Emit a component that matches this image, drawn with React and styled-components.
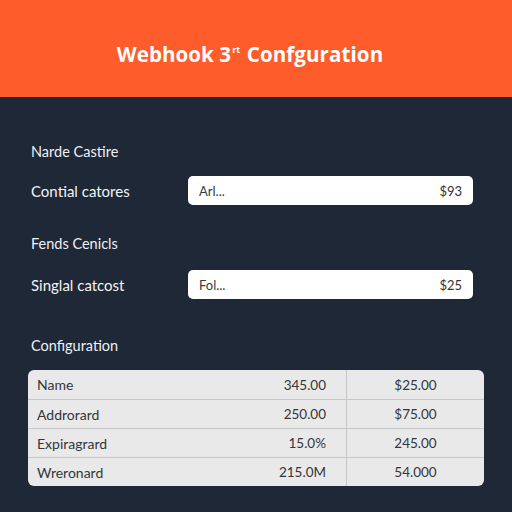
import React from "react";
import styled, { createGlobalStyle } from "styled-components";

const Global = createGlobalStyle`
  html, body { margin: 0; padding: 0; background: #1f2837; }
  body { font-family: Lato, "Open Sans", "Liberation Sans", sans-serif; }
`;

const Page = styled.div`
  width: 512px;
  height: 512px;
  background: #1f2837;
  display: flex;
  flex-direction: column;
  overflow: hidden;
`;

const Header = styled.header`
  height: 97px;
  background: #fe5c2a;
  display: flex;
  align-items: center;
  justify-content: center;
  padding-right: 12px;
  padding-top: 10px;
  box-sizing: border-box;
`;

const Title = styled.h1`
  margin: 0;
  color: #ffffff;
  font-family: "Open Sans", Lato, sans-serif;
  font-weight: 700;
  font-size: 20.5px;
  letter-spacing: 0.1px;
`;

const Sup = styled.sup`
  font-size: 9px;
  vertical-align: 9px;
  line-height: 0;
  margin-left: 1px;
  margin-right: 1px;
`;

const Content = styled.main`
  display: flex;
  flex-direction: column;
  padding: 46px 39px 0 31px;
`;

const SectionLabel = styled.div`
  color: #eef0f3;
  font-size: 14.5px;
  line-height: 17px;
  margin-top: ${(p) => p.$top || 0}px;
`;

const FieldRow = styled.div`
  display: flex;
  align-items: center;
  margin-top: ${(p) => p.$top || 0}px;
`;

const FieldLabel = styled.div`
  width: 157px;
  color: #f2f3f5;
  font-size: 15px;
`;

const Input = styled.div`
  flex: 1;
  height: 29px;
  background: #ffffff;
  border-radius: 5px;
  display: flex;
  align-items: center;
  justify-content: space-between;
  padding: 0 11px;
  box-sizing: border-box;
  font-size: 13px;
  color: #3a3a3a;
`;

const Price = styled.span`
  color: #333;
`;

const Table = styled.div`
  margin: 16px -11px 0 -3px;
  background: #e9e9ea;
  border-radius: 6px;
  overflow: hidden;
`;

const Row = styled.div`
  display: grid;
  grid-template-columns: 1fr 110px 137px;
  height: 29px;
  border-top: ${(p) => (p.$first ? "none" : "1px solid #c6c7c9")};
  box-sizing: border-box;
  font-size: 13.5px;
  color: #343638;
`;

const NameCell = styled.div`
  display: flex;
  align-items: center;
  padding-left: 9px;
  font-size: 14px;
`;

const ValueCell = styled.div`
  display: flex;
  align-items: center;
  justify-content: flex-end;
  padding-right: 20px;
  border-right: 1px solid #c6c7c9;
`;

const CenterCell = styled.div`
  display: flex;
  align-items: center;
  justify-content: center;
`;

const rows = [
  ["Name", "345.00", "$25.00"],
  ["Addrorard", "250.00", "$75.00"],
  ["Expiragrard", "15.0%", "245.00"],
  ["Wreronard", "215.0M", "54.000"],
];

export default function App() {
  return (
    <Page>
      <Global />
      <Header>
        <Title>
          Webhook 3<Sup>rt</Sup> Confguration
        </Title>
      </Header>
      <Content>
        <SectionLabel>Narde Castire</SectionLabel>
        <FieldRow $top={16}>
          <FieldLabel>Contial catores</FieldLabel>
          <Input>
            <span>Arl...</span>
            <Price>$93</Price>
          </Input>
        </FieldRow>
        <SectionLabel $top={30}>Fends Cenicls</SectionLabel>
        <FieldRow $top={18}>
          <FieldLabel>Singlal catcost</FieldLabel>
          <Input>
            <span>Fol...</span>
            <Price>$25</Price>
          </Input>
        </FieldRow>
        <SectionLabel $top={38}>Configuration</SectionLabel>
        <Table>
          {rows.map((r, i) => (
            <Row key={r[0]} $first={i === 0}>
              <NameCell>{r[0]}</NameCell>
              <ValueCell>{r[1]}</ValueCell>
              <CenterCell>{r[2]}</CenterCell>
            </Row>
          ))}
        </Table>
      </Content>
    </Page>
  );
}
